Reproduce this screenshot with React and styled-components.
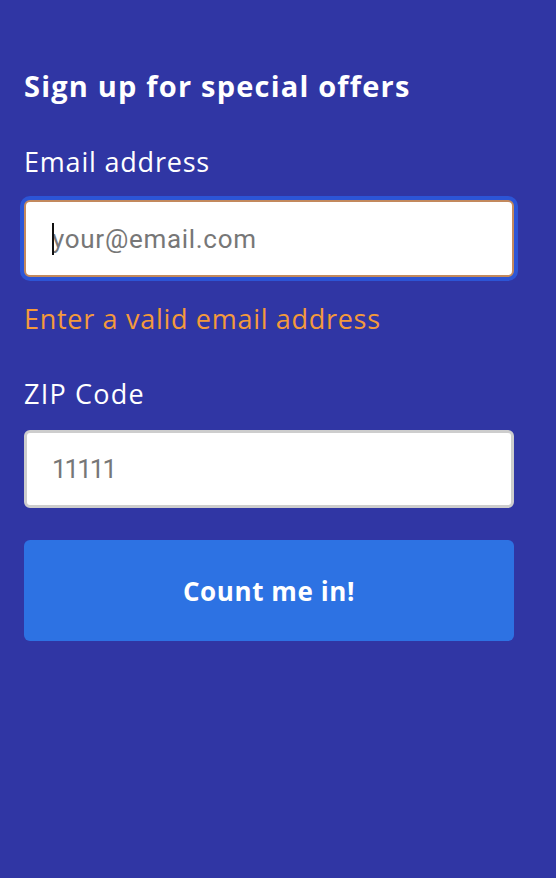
import React from "react";
import styled, { createGlobalStyle } from "styled-components";

const Global = createGlobalStyle`
  html, body { margin: 0; padding: 0; background: #3036a4; }
  body { font-family: "Open Sans", "Noto Sans", sans-serif; }
  * { box-sizing: border-box; }
`;

const Page = styled.div`
  min-height: 878px;
  background: #3036a4;
  padding: 66px 42px 0 24px;
  display: flex;
  flex-direction: column;
`;

const Title = styled.h1`
  margin: 0 0 40px;
  font-family: "Open Sans", sans-serif;
  font-weight: 700;
  font-size: 29px;
  line-height: 40px;
  color: #fff;
  letter-spacing: 1.2px;
`;

const Label = styled.label`
  display: block;
  font-family: "Open Sans", sans-serif;
  font-weight: 400;
  font-size: 27px;
  line-height: 32px;
  color: #fff;
  letter-spacing: ${(p) => p.$spacing ?? 0.8}px;
  margin-bottom: ${(p) => p.$gap ?? 20}px;
`;

const Field = styled.div`
  position: relative;
  display: flex;
`;

const Input = styled.input`
  width: 100%;
  height: ${(p) => p.$h}px;
  border-radius: 6px;
  border: ${(p) => (p.$invalid ? "2px solid #c3895d" : "3px solid #cdcdcd")};
  box-shadow: ${(p) => (p.$invalid ? "0 0 0 4px #2c55d6" : "none")};
  background: #fff;
  padding: 0 0 0 ${(p) => (p.$invalid ? 26 : 25)}px;
  font-family: "Roboto", "Liberation Sans", sans-serif;
  font-size: 26px;
  letter-spacing: ${(p) => p.$spacing}px;
  color: #333;
  outline: none;
  &::placeholder { color: #777; }
`;

const Caret = styled.span`
  position: absolute;
  left: 28px;
  top: 23px;
  width: 2px;
  height: 32px;
  background: #111;
`;

const Error = styled.div`
  font-family: "Open Sans", sans-serif;
  font-weight: 400;
  font-size: 27px;
  line-height: 32px;
  letter-spacing: 0.7px;
  color: #f49a3b;
  margin: 26px 0 43px;
`;

const ZipGroup = styled.div`
  margin-bottom: 32px;
`;

const Button = styled.button`
  height: 101px;
  width: 100%;
  border: none;
  border-radius: 6px;
  background: #2d72e3;
  color: #fff;
  font-family: "Open Sans", sans-serif;
  font-weight: 700;
  font-size: 26px;
  letter-spacing: 0.6px;
  cursor: pointer;
`;

export default function App() {
  return (
    <>
      <Global />
      <Page>
        <Title>Sign up for special offers</Title>
        <Label htmlFor="email" $gap={22}>Email address</Label>
        <Field>
          <Input id="email" $h={77} $invalid $spacing={0.7} placeholder="your@email.com" />
          <Caret />
        </Field>
        <Error>Enter a valid email address</Error>
        <ZipGroup>
          <Label htmlFor="zip" $gap={20} $spacing={1.2}>ZIP Code</Label>
          <Field>
            <Input id="zip" $h={78} $spacing={-2} placeholder="11111" />
          </Field>
        </ZipGroup>
        <Button>Count me in!</Button>
      </Page>
    </>
  );
}
